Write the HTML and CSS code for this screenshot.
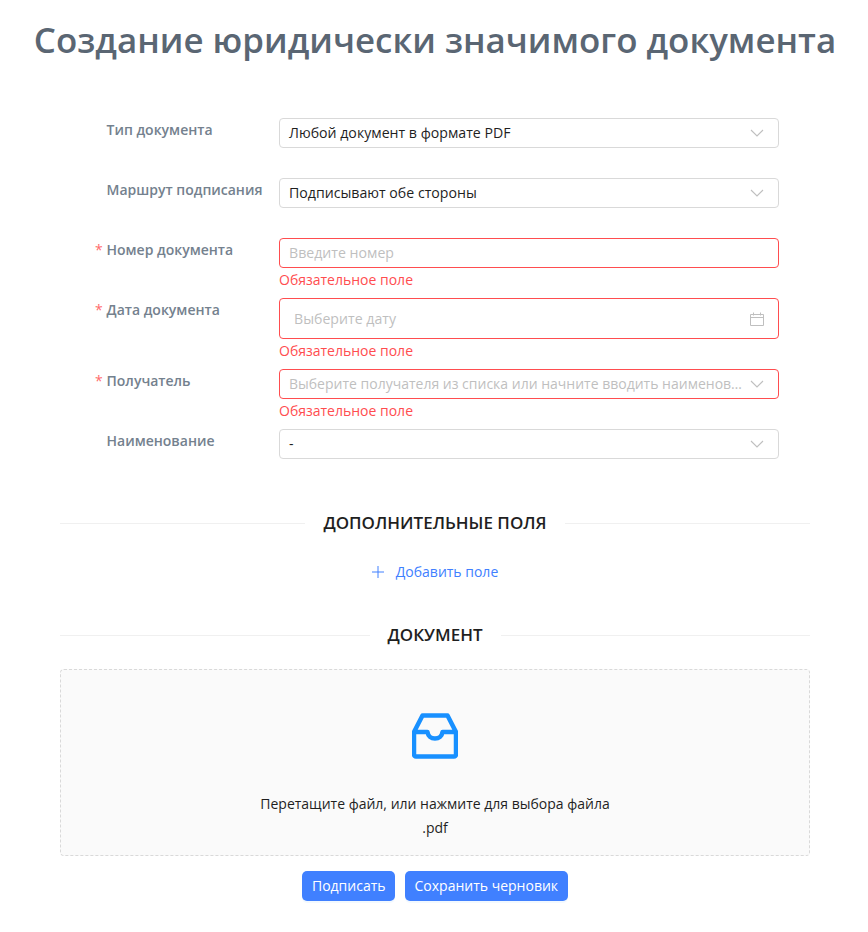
FILE: index.html
```html
<!DOCTYPE html>
<html lang="ru">
<head>
<meta charset="utf-8">
<title>Создание документа</title>
<link rel="stylesheet" href="styles.css">
</head>
<body>
<h1 class="title">Создание юридически значимого документа</h1>
<form class="form">
  <div class="row">
    <div class="label">Тип документа</div>
    <div class="control">
      <div class="field"><span class="value">Любой документ в формате PDF</span>
        <svg class="arrow" viewBox="0 0 14 8"><path d="M1 1l6 6 6-6"/></svg></div>
    </div>
  </div>
  <div class="row">
    <div class="label">Маршрут подписания</div>
    <div class="control">
      <div class="field"><span class="value">Подписывают обе стороны</span>
        <svg class="arrow" viewBox="0 0 14 8"><path d="M1 1l6 6 6-6"/></svg></div>
    </div>
  </div>
  <div class="row row-error">
    <div class="label"><span class="req">*</span>Номер документа</div>
    <div class="control">
      <div class="field field-error"><span class="placeholder">Введите номер</span></div>
      <div class="explain">Обязательное поле</div>
    </div>
  </div>
  <div class="row row-error">
    <div class="label"><span class="req">*</span>Дата документа</div>
    <div class="control">
      <div class="field field-error field-date"><span class="placeholder">Выберите дату</span>
        <svg class="cal" viewBox="0 0 14 14"><path d="M.5 2.500h13v11H.5zM.5 5.500h13M3.500.5v3M10.500.5v3"/></svg></div>
      <div class="explain">Обязательное поле</div>
    </div>
  </div>
  <div class="row row-error">
    <div class="label"><span class="req">*</span>Получатель</div>
    <div class="control">
      <div class="field field-error"><span class="placeholder placeholder-long">Выберите получателя из списка или начните вводить наименов…</span>
        <svg class="arrow" viewBox="0 0 14 8"><path d="M1 1l6 6 6-6"/></svg></div>
      <div class="explain">Обязательное поле</div>
    </div>
  </div>
  <div class="row">
    <div class="label">Наименование</div>
    <div class="control">
      <div class="field"><span class="value">-</span>
        <svg class="arrow" viewBox="0 0 14 8"><path d="M1 1l6 6 6-6"/></svg></div>
    </div>
  </div>
</form>
<div class="divider divider-first"><span>ДОПОЛНИТЕЛЬНЫЕ ПОЛЯ</span></div>
<div class="add">
  <svg class="plus" viewBox="0 0 12 12"><path d="M6 0v12M0 6h12"/></svg>
  <span>Добавить поле</span>
</div>
<div class="divider divider-second"><span>ДОКУМЕНТ</span></div>
<div class="upload">
  <svg class="inbox" viewBox="0 0 46 46"><path d="M10.500 2.500h25L44 19v22.500a2 2 0 0 1-2 2H4a2 2 0 0 1-2-2V19zM2 19h13.500c.5 4 3.500 6.500 7.500 6.500s7-2.500 7.500-6.500H44"/></svg>
  <p class="upload-text">Перетащите файл, или нажмите для выбора файла</p>
  <p class="upload-hint">.pdf</p>
</div>
<div class="actions">
  <button type="button" class="btn">Подписать</button>
  <button type="button" class="btn">Сохранить черновик</button>
</div>
</body>
</html>
```
FILE: styles.css
```css
* { box-sizing: border-box; }
html, body { margin: 0; padding: 0; }
body {
  width: 868px;
  height: 932px;
  overflow: hidden;
  background: #fff;
  padding: 0 58px 0 60px;
  font-family: "Open Sans", "Noto Sans", sans-serif;
  font-size: 14px;
  line-height: 22px;
  color: #1f1f1f;
}
.title {
  margin: 14px -40px 0;
  height: 52px;
  text-align: center;
  font-size: 34.880px;
  line-height: 52px;
  font-weight: 600;
  color: #5a6673;
  white-space: nowrap;
}
.form { margin-top: 52px; display: flex; flex-direction: column; }
.row { display: flex; margin-bottom: 30px; }
.row-error { margin-bottom: 0; }
.label {
  position: relative;
  width: 219px;
  padding-left: 46.500px;
  flex: none;
  font-weight: 600;
  color: #74818e;
  line-height: 24px;
  white-space: nowrap;
}
.req {
  position: absolute;
  left: 35px;
  top: 0;
  color: #ff6b6d;
  font-weight: 400;
}
.control { width: 500px; flex: none; }
.field {
  display: flex;
  align-items: center;
  height: 30px;
  padding: 0 14px 0 9px;
  border: 1px solid #d9d9d9;
  border-radius: 4px;
  background: #fff;
}
.field-error { border-color: #ff4d4f; }
.field-date { height: 41px; padding: 0 14px; }
.value, .placeholder {
  flex: 1;
  min-width: 0;
  white-space: nowrap;
  font-size: 14.150px;
}
.placeholder { color: #bfbfbf; }
.placeholder-long { font-size: 14px; }
.arrow {
  width: 14px;
  height: 8px;
  margin-left: 8px;
  flex: none;
  fill: none;
  stroke: #bfbfbf;
  stroke-width: 1.100;
}
.cal {
  width: 14px;
  height: 14px;
  flex: none;
  fill: none;
  stroke: #bfbfbf;
  stroke-width: 1;
}
.explain {
  height: 30px;
  padding-top: 1px;
  color: #ff4d4f;
  line-height: 22px;
}
.divider {
  display: flex;
  align-items: center;
  gap: 18px;
  width: 750px;
  font-size: 17px;
  font-weight: 600;
  line-height: 24px;
  color: #1f1f1f;
  white-space: nowrap;
}
.divider::before, .divider::after {
  content: "";
  flex: 1;
  border-top: 1px solid #f0f0f0;
}
.divider-first { margin-top: 22px; }
.divider-second { margin-top: 39px; }
.add {
  margin-top: 25px;
  height: 24px;
  display: flex;
  align-items: center;
  justify-content: center;
  gap: 12px;
  color: #4080ff;
}
.plus {
  width: 12px;
  height: 12px;
  fill: none;
  stroke: #4080ff;
  stroke-width: 1;
}
.upload {
  margin-top: 22px;
  width: 750px;
  height: 187px;
  padding-top: 43px;
  border: 1px dashed #d9d9d9;
  border-radius: 4px;
  background: #fafafa;
  text-align: center;
}
.inbox {
  display: block;
  width: 46px;
  height: 46px;
  margin: 0 auto;
  fill: none;
  stroke: #1890ff;
  stroke-width: 4.500;
  stroke-linejoin: round;
}
.upload-text { margin: 33px 0 0; line-height: 24px; }
.upload-hint { margin: 0; line-height: 24px; }
.actions {
  margin-top: 15px;
  display: flex;
  justify-content: center;
  gap: 10px;
}
.btn {
  height: 30px;
  padding: 0 9.500px;
  border: 0;
  border-radius: 5px;
  background: #4080ff;
  color: #fff;
  font: inherit;
  box-shadow: 0 2px 0 rgba(5, 145, 255, .05);
}
```
